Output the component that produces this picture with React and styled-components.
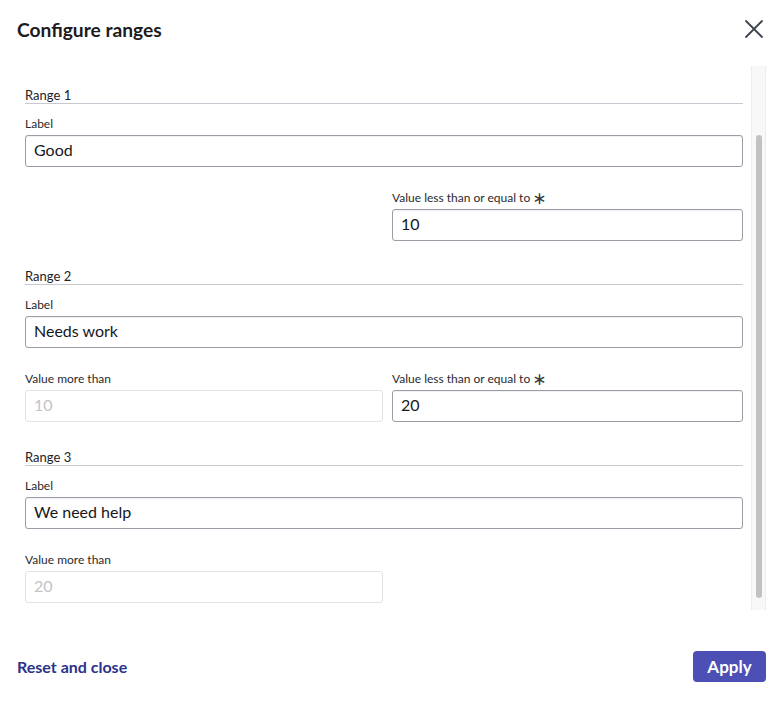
import React, { useState } from 'react';
import styled, { createGlobalStyle } from 'styled-components';

const GlobalStyle = createGlobalStyle`
  * {
    box-sizing: border-box;
  }

  body {
    margin: 0;
    background: #fff;
    font-family: Lato, 'Noto Sans', sans-serif;
    color: #1d1d22;
  }
`;

const Dialog = styled.div`
  width: 781px;
  height: 703px;
  display: flex;
  flex-direction: column;
  background: #fff;
`;

const Header = styled.div`
  height: 66px;
  display: flex;
  align-items: flex-start;
  justify-content: space-between;
  padding: 17px 17px 0 17px;
`;

const Title = styled.h1`
  margin: 0;
  font-size: 19.2px;
  line-height: 26px;
  font-weight: 700;
  color: #1b1b20;
`;

const CloseButton = styled.button`
  border: none;
  background: transparent;
  padding: 0;
  margin-top: 2px;
  width: 20px;
  height: 20px;
  cursor: pointer;
  color: #3d4350;
`;

const Body = styled.div`
  height: 544px;
  display: flex;
  padding-right: 15px;
`;

const Content = styled.div`
  flex: 1;
  padding: 21px 8px 0 25px;
`;

const ScrollTrack = styled.div`
  width: 15px;
  background: #f8f8f8;
  border-left: 1px solid #ededed;
  border-right: 1px solid #ededed;
  display: flex;
  flex-direction: column;
  padding: 69px 3px 12px 4px;
`;

const ScrollThumb = styled.div`
  flex: 1;
  border-radius: 4px;
  background: #c2c2c2;
`;

const Section = styled.section`
  & + & {
    margin-top: 27px;
  }
`;

const Heading = styled.div`
  font-size: 13px;
  line-height: 16px;
  color: #222;
  border-bottom: 1px solid #c8c8d1;
`;

const Field = styled.label`
  display: flex;
  flex-direction: column;
  gap: 3px;
  margin-top: ${(p) => p.$top}px;
`;

const FieldLabel = styled.span`
  font-size: 12px;
  line-height: 16px;
  color: #2a2a30;
`;

const Required = styled.span`
  font-family: 'DejaVu Sans', sans-serif;
  font-size: 17px;
  line-height: 10px;
  margin-left: 2px;
  color: #3a3a40;
  position: relative;
  top: 2px;
`;

const Input = styled.input`
  height: 32px;
  width: 100%;
  padding: 0 8px 4px;
  font-family: Lato, 'Noto Sans', sans-serif;
  font-size: 16px;
  color: #17171c;
  border: 1px solid ${(p) => (p.disabled ? '#e2e2e6' : '#9c9ca6')};
  border-radius: 3px;
  background: #fff;
  box-shadow: ${(p) => (p.disabled ? 'none' : 'inset 0 1px 1px rgba(0,0,0,0.06)')};
  outline: none;

  &:disabled {
    color: #c3c3c8;
  }
`;

const ValueRow = styled.div`
  display: grid;
  grid-template-columns: 358px 1fr;
  column-gap: 9px;
  margin-top: 23px;
`;

const Cell = styled.div`
  grid-column: ${(p) => p.$col};
`;

const Footer = styled.div`
  flex: 1;
  display: flex;
  align-items: flex-start;
  justify-content: space-between;
  padding: 41px 15px 0 17px;
`;

const LinkButton = styled.button`
  border: none;
  background: transparent;
  padding: 0;
  height: 31px;
  font-family: Lato, 'Noto Sans', sans-serif;
  font-size: 16px;
  font-weight: 700;
  color: #2c3189;
  cursor: pointer;
`;

const ApplyButton = styled.button`
  width: 73px;
  height: 31px;
  border: none;
  border-radius: 4px;
  background: #4c4fb4;
  color: #fff;
  font-family: Lato, 'Noto Sans', sans-serif;
  font-size: 17px;
  font-weight: 700;
  cursor: pointer;
`;

const initialRanges = [
  { label: 'Good', min: null, max: '10' },
  { label: 'Needs work', min: '10', max: '20' },
  { label: 'We need help', min: '20', max: null },
];

function CloseIcon() {
  return (
    <svg width='20' height='20' viewBox='0 0 20 20' fill='none'>
      <path d='M2 2 L18 18 M18 2 L2 18' stroke='currentColor' strokeWidth='1.8' strokeLinecap='round' />
    </svg>
  );
}

function RangeSection({ index, range, onChange }) {
  return (
    <Section>
      <Heading>Range {index + 1}</Heading>
      <Field $top={12}>
        <FieldLabel>Label</FieldLabel>
        <Input value={range.label} onChange={(e) => onChange(index, 'label', e.target.value)} />
      </Field>
      <ValueRow>
        {range.min !== null && (
          <Cell $col={1}>
            <Field $top={0}>
              <FieldLabel>Value more than</FieldLabel>
              <Input value={range.min} disabled readOnly />
            </Field>
          </Cell>
        )}
        {range.max !== null && (
          <Cell $col={2}>
            <Field $top={0}>
              <FieldLabel>
                Value less than or equal to<Required>∗</Required>
              </FieldLabel>
              <Input value={range.max} onChange={(e) => onChange(index, 'max', e.target.value)} />
            </Field>
          </Cell>
        )}
      </ValueRow>
    </Section>
  );
}

export default function App() {
  const [ranges, setRanges] = useState(initialRanges);

  const handleChange = (index, key, value) => {
    setRanges((prev) => prev.map((r, i) => (i === index ? { ...r, [key]: value } : r)));
  };

  return (
    <>
      <GlobalStyle />
      <Dialog>
        <Header>
          <Title>Configure ranges</Title>
          <CloseButton aria-label='Close'>
            <CloseIcon />
          </CloseButton>
        </Header>
        <Body>
          <Content>
            {ranges.map((range, i) => (
              <RangeSection key={i} index={i} range={range} onChange={handleChange} />
            ))}
          </Content>
          <ScrollTrack>
            <ScrollThumb />
          </ScrollTrack>
        </Body>
        <Footer>
          <LinkButton onClick={() => setRanges(initialRanges)}>Reset and close</LinkButton>
          <ApplyButton>Apply</ApplyButton>
        </Footer>
      </Dialog>
    </>
  );
}
